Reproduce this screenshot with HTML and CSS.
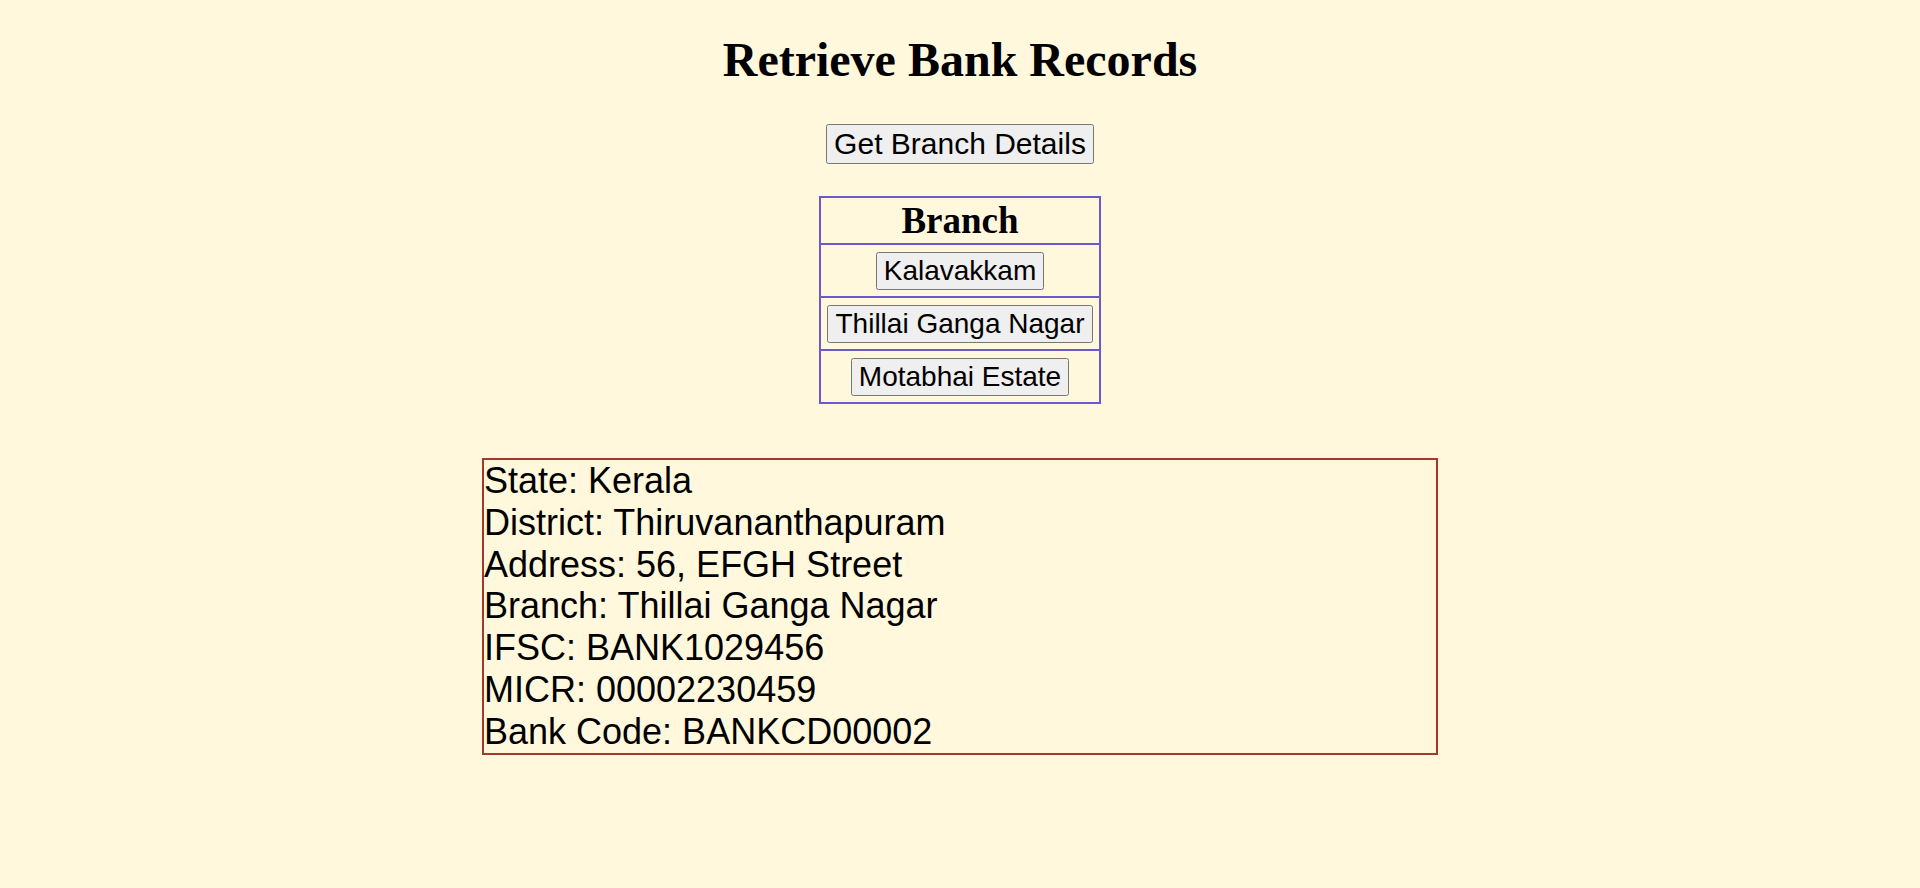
FILE: index.html
```html
<!DOCTYPE html>
<html lang="en">
<head>
<meta charset="utf-8">
<title>Retrieve Bank Records</title>
<link rel="stylesheet" href="styles.css">
</head>
<body>
<main class="page">
  <h1 class="title">Retrieve Bank Records</h1>
  <button class="btn btn-main" type="button">Get Branch Details</button>
  <table class="branches">
    <thead>
      <tr><th class="branches-head">Branch</th></tr>
    </thead>
    <tbody>
      <tr><td class="branches-cell"><button class="btn btn-branch" type="button">Kalavakkam</button></td></tr>
      <tr><td class="branches-cell"><button class="btn btn-branch" type="button">Thillai Ganga Nagar</button></td></tr>
      <tr><td class="branches-cell"><button class="btn btn-branch" type="button">Motabhai Estate</button></td></tr>
    </tbody>
  </table>
  <div class="details">
    <div class="details-line">State: Kerala</div>
    <div class="details-line">District: Thiruvananthapuram</div>
    <div class="details-line">Address: 56, EFGH Street</div>
    <div class="details-line">Branch: Thillai Ganga Nagar</div>
    <div class="details-line">IFSC: BANK1029456</div>
    <div class="details-line">MICR: 00002230459</div>
    <div class="details-line">Bank Code: BANKCD00002</div>
  </div>
</main>
</body>
</html>
```

FILE: styles.css
```css
html, body {
  margin: 0;
  padding: 0;
}

body {
  background: #fff8dc;
  color: #000;
  font-family: "Liberation Serif", "Times New Roman", serif;
}

.page {
  display: flex;
  flex-direction: column;
  align-items: center;
  padding: 32px 8px 8px;
}

.title {
  margin: 0;
  font-family: "Liberation Serif", "Times New Roman", serif;
  font-size: 48px;
  font-weight: bold;
  line-height: 55px;
  text-align: center;
}

.btn {
  font-family: "Liberation Sans", Arial, sans-serif;
  color: #000;
}

.btn-main {
  margin-top: 37px;
  font-size: 30px;
}

.branches {
  margin-top: 32px;
  border-collapse: collapse;
  border: 2px solid #6a5acd;
}

.branches-head {
  border: 2px solid #6a5acd;
  padding: 1px 6px;
  font-family: "Liberation Serif", "Times New Roman", serif;
  font-size: 37px;
  font-weight: bold;
  text-align: center;
}

.branches-cell {
  border: 2px solid #6a5acd;
  padding: 6.5px 6px;
  text-align: center;
}

.btn-branch {
  font-size: 28px;
}

.details {
  width: 50%;
  margin-top: 54px;
  border: 2px solid #a5382a;
  font-family: "Liberation Sans", Arial, sans-serif;
  font-size: 36px;
  line-height: 41.8px;
}
```
